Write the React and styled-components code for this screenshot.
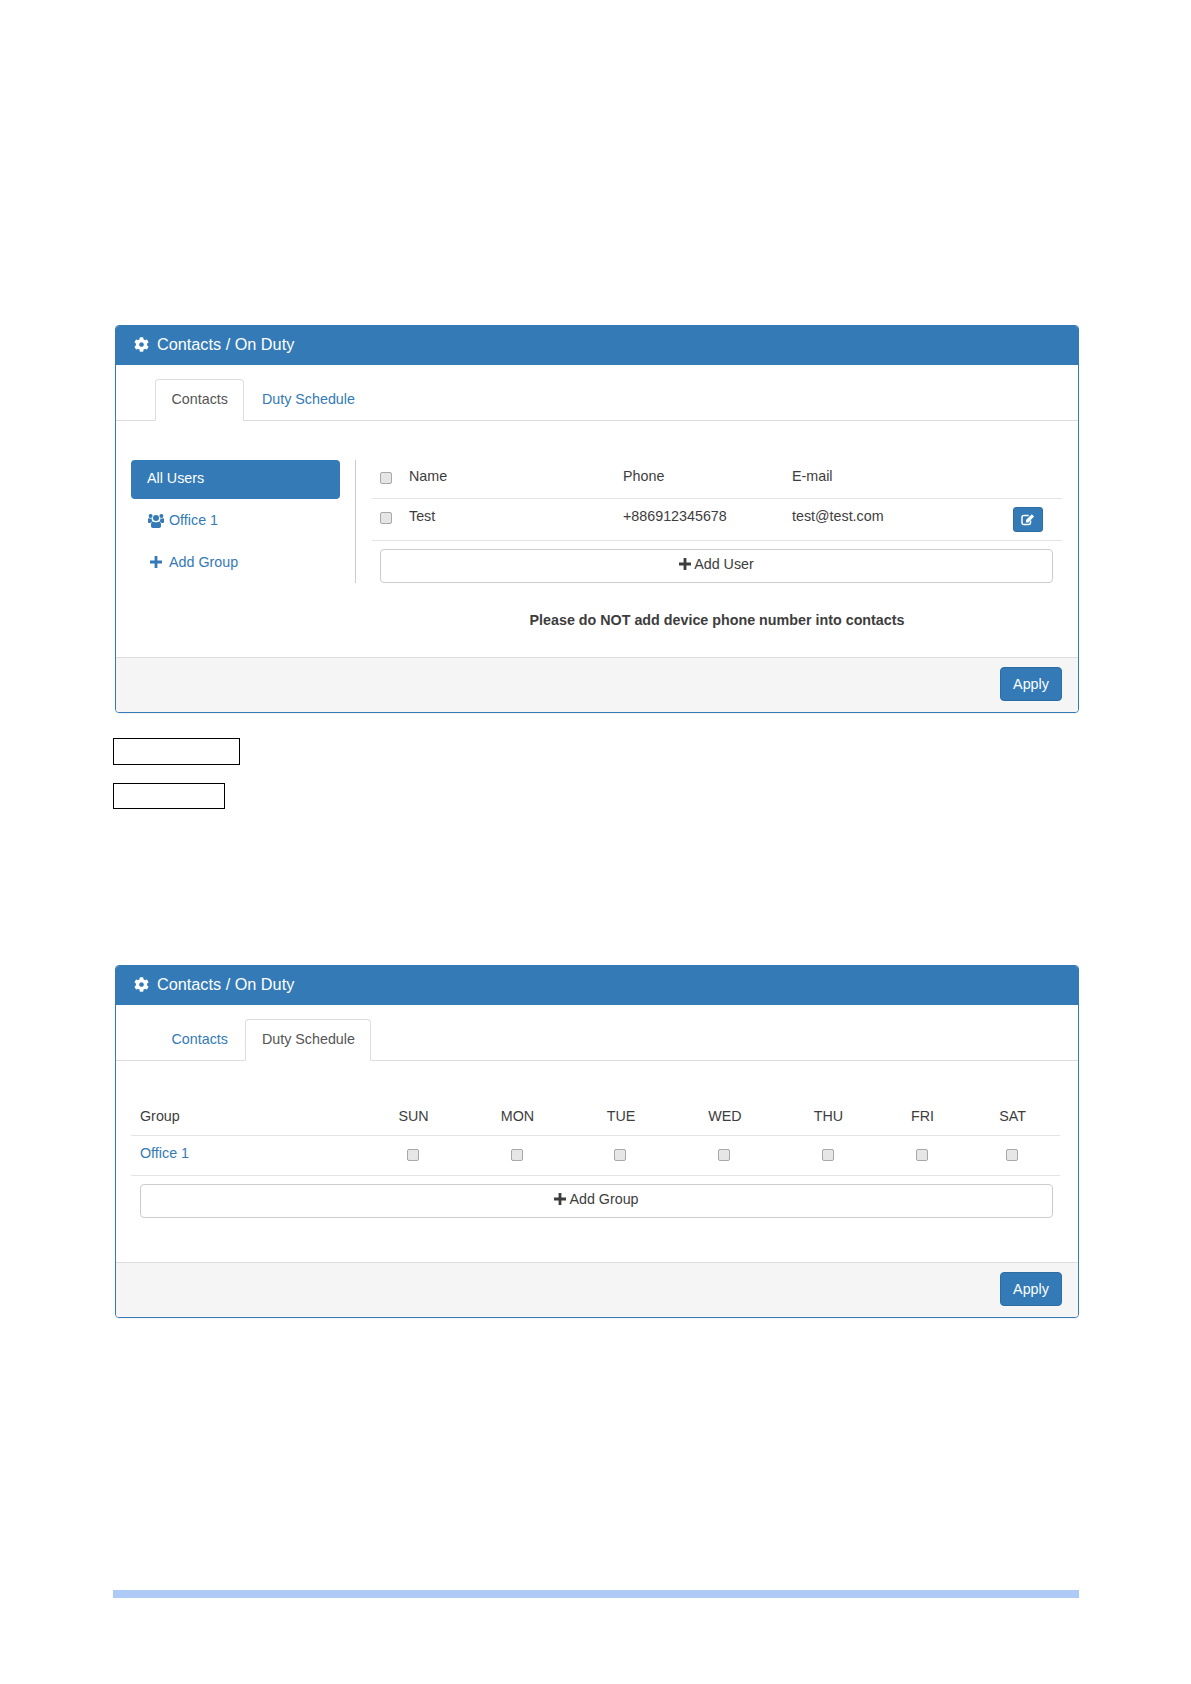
import React from 'react'
import styled, { createGlobalStyle } from 'styled-components'
import { FaCog } from 'react-icons/fa'

const GlobalStyle = createGlobalStyle`
  html, body {
    margin: 0;
    background: #fff;
    font-family: "Liberation Sans", Arial, sans-serif;
    font-size: 14.3px;
    color: #3d3d3d;
  }
  * {
    box-sizing: border-box;
  }
`

const Page = styled.div`
  width: 1191px;
  height: 1684px;
  padding: 325px 112px 0 113px;
`

const Panel = styled.section`
  margin: ${p => p.$top || 0}px 0 0 2px;
  border: 1px solid #337ab7;
  border-radius: 4px;
  background: #fff;
  overflow: hidden;
  box-shadow: 0 1px 1px rgba(0, 0, 0, 0.05);
`

const Heading = styled.header`
  display: flex;
  align-items: center;
  gap: 8px;
  height: 39px;
  padding: 0 0 2px 18px;
  background: #337ab7;
  color: #fff;
  font-size: 16.25px;
`

const TabBar = styled.nav`
  display: flex;
  height: 56px;
  padding: 14px 0 0 39px;
  border-bottom: 1px solid #ddd;
`

const Tab = styled.div`
  height: ${p => (p.$active ? 42 : 41)}px;
  padding: 9px 15.5px 0;
  margin-right: 1px;
  border: 1px solid ${p => (p.$active ? '#ddd' : 'transparent')};
  border-bottom-color: ${p => (p.$active ? '#fff' : 'transparent')};
  border-radius: 4px 4px 0 0;
  background: ${p => (p.$active ? '#fff' : 'transparent')};
  color: ${p => (p.$active ? '#555' : '#337ab7')};
  line-height: 20px;
`

const ContactsBody = styled.div`
  display: flex;
  padding: 39px 16px 27px 15px;
`

const SideColumn = styled.div`
  width: 225px;
  height: 123px;
  padding-right: 15px;
  border-right: 1px solid #ccc;
  display: flex;
  flex-direction: column;
  gap: 3px;
  flex-shrink: 0;
`

const Pill = styled.div`
  display: flex;
  align-items: center;
  gap: 5px;
  height: 39px;
  padding: 0 0 3px ${p => (p.$active ? '16px' : '17px')};
  border-radius: 4px;
  background: ${p => (p.$active ? '#337ab7' : 'transparent')};
  color: ${p => (p.$active ? '#fff' : '#337ab7')};
`

const IconSlot = styled.span`
  display: flex;
  justify-content: center;
  width: 16px;
`

const MainColumn = styled.div`
  flex: 1;
  padding-left: 16px;
`

const ContactGrid = styled.div`
  display: grid;
  grid-template-columns: 37px 214px 169px 221px 49px;
  height: ${p => p.$height}px;
  border-bottom: 1px solid #e4e4e4;
  padding-top: ${p => p.$pad}px;
  line-height: 20px;
`

const Check = styled.input.attrs({ type: 'checkbox' })`
  appearance: none;
  display: block;
  width: 12px;
  height: 12px;
  margin: ${p => p.$top}px 0 0 8px;
  border: 1px solid #a8a8a8;
  border-radius: 2px;
  background: #e6e6e6;
`

const EditButton = styled.button`
  display: flex;
  align-items: center;
  justify-content: center;
  width: 30px;
  height: 25px;
  margin-top: 1px;
  padding: 0;
  border: 1px solid #2e6da4;
  border-radius: 3px;
  background: #337ab7;
  color: #fff;
`

const AddButton = styled.button`
  display: flex;
  align-items: center;
  justify-content: center;
  gap: 3px;
  width: ${p => p.$width}px;
  height: 34px;
  margin: 8px 0 0 ${p => p.$left}px;
  padding: 0 0 5px;
  border: 1px solid #ccc;
  border-radius: 4px;
  background: #fff;
  color: #3d3d3d;
  font: inherit;
`

const Notice = styled.p`
  margin: 27px 0 0;
  line-height: 20px;
  text-align: center;
  font-weight: 700;
`

const Footer = styled.footer`
  display: flex;
  justify-content: flex-end;
  height: 55px;
  padding: 9px 16px 0 0;
  border-top: 1px solid #ddd;
  background: #f5f5f5;
`

const ApplyButton = styled.button`
  width: 62px;
  height: 34px;
  padding: 0;
  border: 1px solid #2e6da4;
  border-radius: 4px;
  background: #337ab7;
  color: #fff;
  font: inherit;
`

const ScheduleBody = styled.div`
  padding: 39px 18px 44px 15px;
`

const ScheduleGrid = styled.div`
  display: grid;
  grid-template-columns: 230px 105px 103px 104px 104px 103px 85px 95px;
  align-items: ${p => (p.$head ? 'end' : 'start')};
  height: ${p => p.$height}px;
  padding-top: ${p => (p.$head ? 0 : 7)}px;
  padding-bottom: ${p => (p.$head ? 9 : 0)}px;
  border-bottom: 1px solid #e4e4e4;
  line-height: 20px;
  text-align: center;
`

const GroupCell = styled.div`
  padding-left: 9px;
  text-align: left;
  color: ${p => (p.$link ? '#337ab7' : 'inherit')};
`

const DayCheck = styled(Check)`
  justify-self: center;
  margin: 6px 2px 0 0;
`

const FooterBar = styled.div`
  height: 8px;
  margin-top: 272px;
  background: #aecbf7;
`

const BlankLabel = styled.div`
  width: ${p => p.$width}px;
  height: ${p => p.$height}px;
  margin-top: ${p => p.$top}px;
  border: 1px solid #000;
`

const DAYS = ['SUN', 'MON', 'TUE', 'WED', 'THU', 'FRI', 'SAT']

const PlusIcon = () => (
  <svg width="12" height="12" viewBox="0 0 12 12" fill="currentColor">
    <path d="M4.6 0h2.8v4.6H12v2.8H7.4V12H4.6V7.4H0V4.6h4.6z" />
  </svg>
)

const UsersIcon = () => (
  <svg width="16" height="15" viewBox="0 0 16 15" fill="currentColor">
    <circle cx="8" cy="5" r="3" />
    <circle cx="2.6" cy="3" r="2" />
    <circle cx="13.4" cy="3" r="2" />
    <path d="M0 6.2c0-1 .6-1.2 1.2-1 .8.5 1.8.5 2.6.4-.2 1-.1 2 .6 2.8-.9.2-1.6.8-2 1.6H1C.4 10 0 9.6 0 9z" />
    <path d="M16 6.2c0-1-.6-1.2-1.2-1-.8.5-1.8.5-2.6.4.2 1 .1 2-.6 2.8.9.2 1.6.8 2 1.6H15c.6 0 1-.4 1-1z" />
    <path d="M4.6 8.4c1 1 5.8 1 6.8 0 1 .2 1.6 1.4 1.6 3.4V13c0 1-.7 2-1.8 2H4.800C3.700 15 3 14 3 13v-1.200c0-2 .6-3.200 1.600-3.400z" />
  </svg>
)

const EditIcon = () => (
  <svg width="14" height="13" viewBox="0 0 14 13" fill="none">
    <path d="M9.500 7.500v2.300c0 1-.7 1.700-1.700 1.700H2.700c-1 0-1.700-.7-1.700-1.700V4.200c0-1 .7-1.700 1.700-1.700h5" stroke="currentColor" strokeWidth="1.500" />
    <path d="M5 9.400V7l5.800-5.800 2.300 2.300-5.800 5.900z" fill="currentColor" />
  </svg>
)

function PanelHeader() {
  return (
    <Heading>
      <FaCog size={15} />
      Contacts / On Duty
    </Heading>
  )
}

function Tabs({ active }) {
  return (
    <TabBar>
      <Tab $active={active === 'contacts'}>Contacts</Tab>
      <Tab $active={active === 'schedule'}>Duty Schedule</Tab>
    </TabBar>
  )
}

export default function App() {
  return (
    <Page>
      <GlobalStyle />
      <Panel>
        <PanelHeader />
        <Tabs active="contacts" />
        <ContactsBody>
          <SideColumn>
            <Pill $active>All Users</Pill>
            <Pill>
              <IconSlot><UsersIcon /></IconSlot>
              Office 1
            </Pill>
            <Pill>
              <IconSlot><PlusIcon /></IconSlot>
              Add Group
            </Pill>
          </SideColumn>
          <MainColumn>
            <ContactGrid $height={39} $pad={6}>
              <Check $top={6} />
              <div>Name</div>
              <div>Phone</div>
              <div>E-mail</div>
            </ContactGrid>
            <ContactGrid $height={42} $pad={7}>
              <Check $top={6} />
              <div>Test</div>
              <div>+886912345678</div>
              <div>test@test.com</div>
              <EditButton aria-label="Edit"><EditIcon /></EditButton>
            </ContactGrid>
            <AddButton $width={673} $left={8}>
              <PlusIcon />
              Add User
            </AddButton>
            <Notice>Please do NOT add device phone number into contacts</Notice>
          </MainColumn>
        </ContactsBody>
        <Footer>
          <ApplyButton>Apply</ApplyButton>
        </Footer>
      </Panel>

      <BlankLabel $width={127} $height={27} $top={25} />
      <BlankLabel $width={112} $height={26} $top={18} />

      <Panel $top={156}>
        <PanelHeader />
        <Tabs active="schedule" />
        <ScheduleBody>
          <ScheduleGrid $head $height={36}>
            <GroupCell>Group</GroupCell>
            {DAYS.map(d => <div key={d}>{d}</div>)}
          </ScheduleGrid>
          <ScheduleGrid $height={40}>
            <GroupCell $link>Office 1</GroupCell>
            {DAYS.map(d => <DayCheck key={d} />)}
          </ScheduleGrid>
          <AddButton $width={913} $left={9}>
            <PlusIcon />
            Add Group
          </AddButton>
        </ScheduleBody>
        <Footer>
          <ApplyButton>Apply</ApplyButton>
        </Footer>
      </Panel>

      <FooterBar />
    </Page>
  )
}
